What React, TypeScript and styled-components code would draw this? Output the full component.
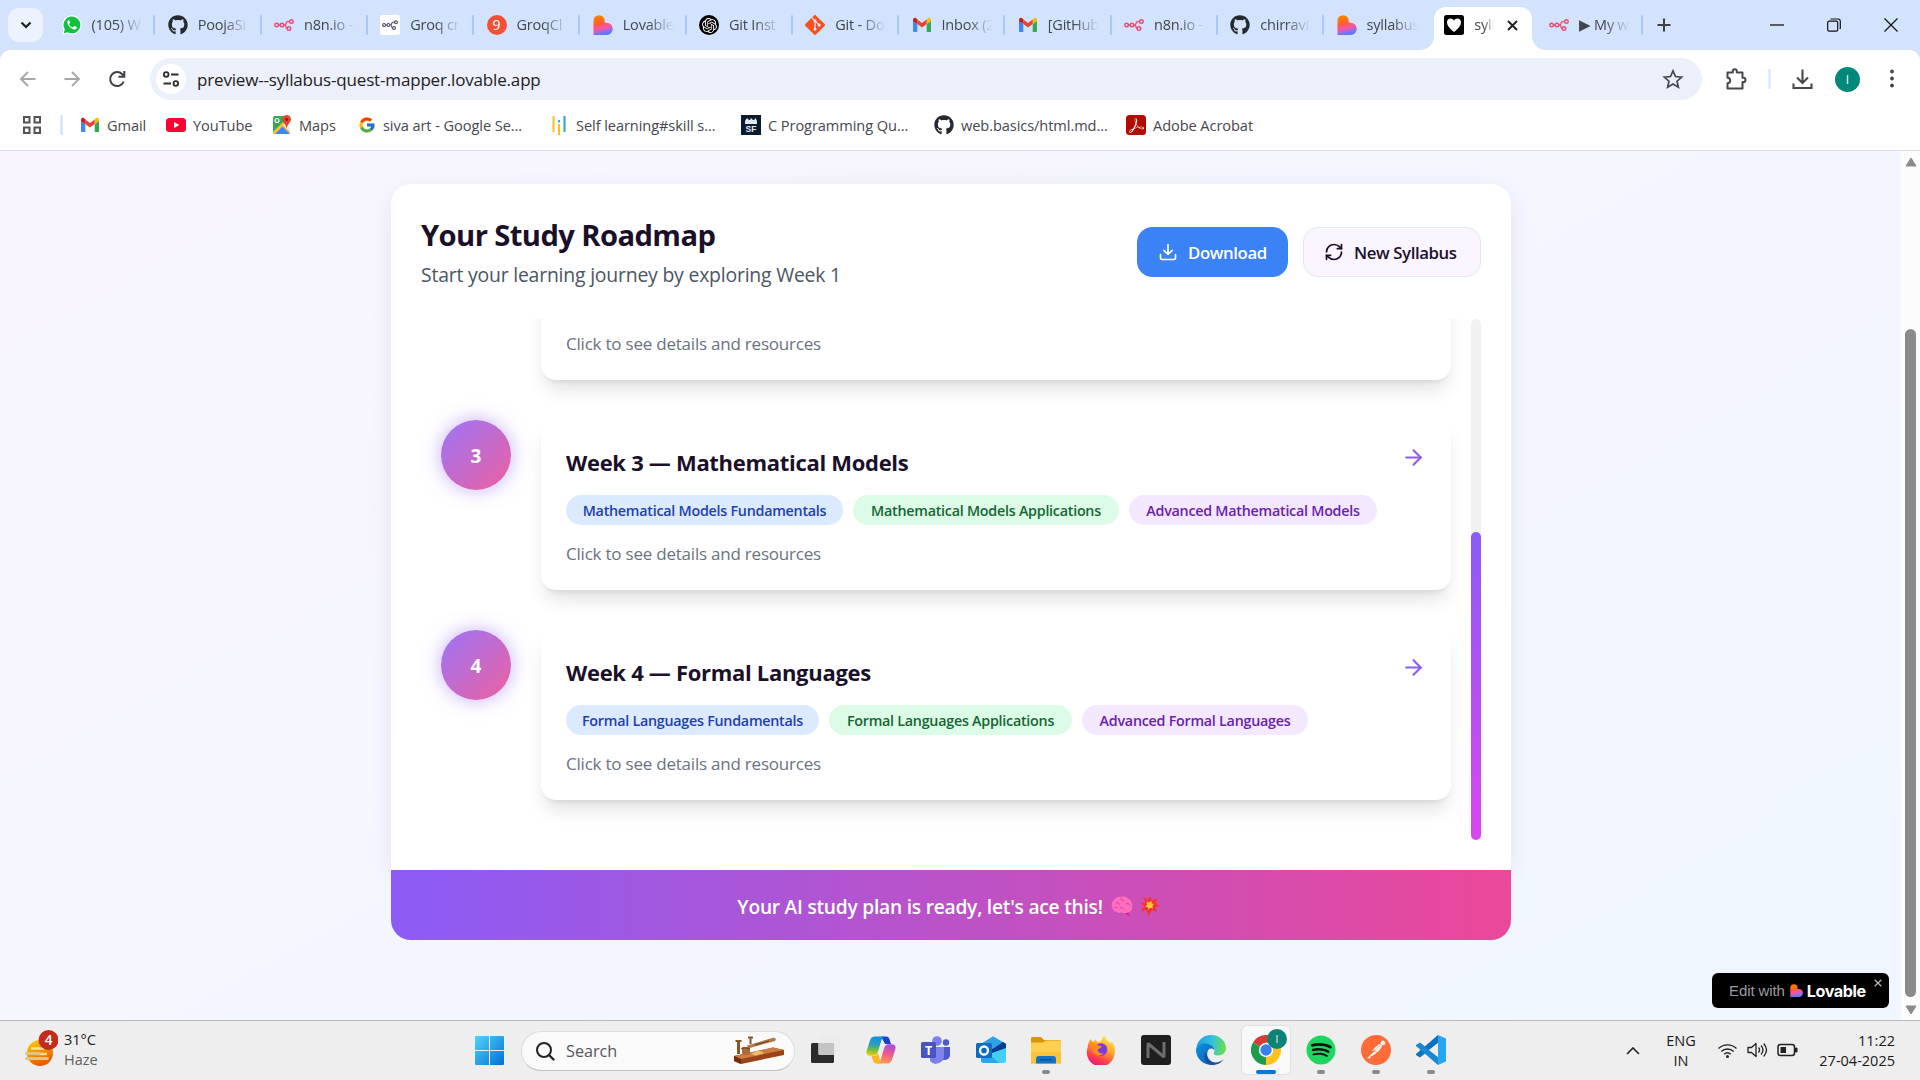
import React from "react";
import styled, { createGlobalStyle, css } from "styled-components";
import { ArrowRight, RefreshCw } from "lucide-react";
import { FaGithub, FaSpotify } from "react-icons/fa";
import { FcGoogle } from "react-icons/fc";
import { SiOpenai, SiPostman, SiGit, SiAdobeacrobatreader } from "react-icons/si";

const ui = `"Open Sans", "Noto Sans", sans-serif`;

const GlobalStyle = createGlobalStyle`
  * { box-sizing: border-box; }
  body { margin: 0; overflow: hidden; font-family: ${ui}; }
  svg { display: block; flex: none; }
`;

/* ---------- browser window ---------- */

const Screen = styled.div`
  width: 1920px;
  height: 1080px;
  display: flex;
  flex-direction: column;
  overflow: hidden;
  background: #d3e3fd;
`;

const TabStrip = styled.div`
  height: 50px;
  flex: none;
  display: flex;
  align-items: center;
  padding-left: 8px;
`;

const TabSearch = styled.div`
  width: 35px;
  height: 34px;
  border-radius: 11px;
  background: #ecf3fe;
  display: flex;
  align-items: center;
  justify-content: center;
  margin-right: 6px;
`;

const Tab = styled.div`
  width: 106.25px;
  height: 50px;
  display: flex;
  align-items: center;
  padding-left: 12.5px;
  flex: none;
`;

const TabLabel = styled.span<{ $w?: number; $ls?: number }>`
  width: ${(p) => p.$w ?? 51}px;
  margin-left: 10px;
  overflow: hidden;
  white-space: nowrap;
  font-size: 14.5px;
  letter-spacing: ${(p) => p.$ls ?? -0.2}px;
  line-height: 24px;
  color: #43474d;
  mask-image: linear-gradient(90deg, #000 50%, transparent 100%);
`;

const Divider = styled.i<{ $h?: number; $c?: string }>`
  width: 2px;
  height: ${(p) => p.$h ?? 20}px;
  border-radius: 1px;
  background: ${(p) => p.$c ?? "#a8c7fa"};
  flex: none;
`;

const TabDivider = styled(Divider)`
  margin-left: auto;
`;

const flare = css`
  content: "";
  position: absolute;
  bottom: 0;
  width: 14px;
  height: 14px;
`;

const ActiveTab = styled.div`
  position: relative;
  width: 98px;
  height: 43px;
  margin: 7px 4px 0 4px;
  border-radius: 12px 12px 0 0;
  background: #fff;
  display: flex;
  align-items: center;
  padding: 0 0 7px 10px;
  flex: none;
  &::before {
    ${flare}
    left: -14px;
    background: radial-gradient(circle at 0 0, transparent 13.5px, #fff 14.5px);
  }
  &::after {
    ${flare}
    right: -14px;
    background: radial-gradient(circle at 100% 0, transparent 13.5px, #fff 14.5px);
  }
`;

const CloseTab = styled.span`
  margin-left: 13px;
`;

const WindowButtons = styled.div`
  margin-left: auto;
  display: flex;
  align-items: center;
  gap: 43px;
  padding-right: 22px;
`;

const Toolbar = styled.div`
  height: 58px;
  flex: none;
  display: flex;
  align-items: center;
  background: #fff;
  border-radius: 11px 11px 0 0;
  padding-left: 17px;
`;

const NavButtons = styled.div`
  display: flex;
  gap: 22px;
  width: 133px;
`;

const Omnibox = styled.div`
  width: 1552px;
  height: 42px;
  border-radius: 21px;
  background: #ecf0fa;
  display: flex;
  align-items: center;
  padding: 0 18px 0 6px;
`;

const SiteInfo = styled.div`
  width: 30px;
  height: 30px;
  border-radius: 50%;
  background: #fff;
  display: flex;
  align-items: center;
  justify-content: center;
`;

const Url = styled.span`
  flex: 1;
  margin-left: 11px;
  font-size: 17px;
  letter-spacing: -0.17px;
  color: #1f2023;
`;

const ToolbarActions = styled.div`
  flex: 1;
  display: flex;
  align-items: center;
  padding-left: 22px;
`;

const Avatar = styled.div`
  width: 25px;
  height: 25px;
  border-radius: 50%;
  background: #00897b;
  color: #fff;
  font-size: 12px;
  display: flex;
  align-items: center;
  justify-content: center;
  margin: 0 30px 0 21px;
`;

const Bookmarks = styled.div`
  height: 43px;
  flex: none;
  display: flex;
  align-items: center;
  background: #fff;
  border-bottom: 1px solid #dcdde0;
  padding: 0 0 8px 22px;
`;

const Bookmark = styled.div<{ $w: number }>`
  width: ${(p) => p.$w}px;
  display: flex;
  align-items: center;
  gap: 7px;
  flex: none;
`;

const BookmarkLabel = styled.span`
  font-size: 14.6px;
  letter-spacing: -0.08px;
  line-height: 22px;
  white-space: nowrap;
  color: #45484d;
`;

/* ---------- page ---------- */

const Viewport = styled.div`
  height: 869px;
  flex: none;
  display: flex;
`;

const Page = styled.main`
  width: 1901px;
  height: 869px;
  position: relative;
  padding: 33px 0 0 391px;
  background: linear-gradient(to bottom right, #faf5ff, #eff6ff) bottom / 100% 1080px no-repeat;
`;

const Card = styled.section`
  width: 1120px;
  display: flex;
  flex-direction: column;
`;

const CardBody = styled.div`
  height: 686px;
  border-radius: 20px 20px 0 0;
  background: #fff;
  box-shadow: 0 6px 26px -4px rgba(30, 20, 60, 0.1);
`;

const CardHeader = styled.header`
  height: 135px;
  display: flex;
  align-items: center;
  justify-content: space-between;
  padding: 1px 30px 0;
`;

const Title = styled.h1`
  margin: 0;
  height: 45px;
  line-height: 41px;
  font-size: 29.2px;
  font-weight: 700;
  letter-spacing: -0.6px;
  color: #1a1029;
`;

const Subtitle = styled.p`
  margin: 0;
  height: 30px;
  line-height: 30px;
  font-size: 19.4px;
  letter-spacing: -0.2px;
  color: #4b5563;
`;

const Actions = styled.div`
  display: flex;
  gap: 15px;
`;

const Button = styled.button<{ $primary?: boolean; $w: number }>`
  width: ${(p) => p.$w}px;
  height: 50px;
  padding: 0 0 0 20px;
  border-radius: 15px;
  border: 1px solid ${(p) => (p.$primary ? "#3b82f6" : "#e2e8f0")};
  background: ${(p) => (p.$primary ? "#3b82f6" : "#faf5ff")};
  color: ${(p) => (p.$primary ? "#fff" : "#1a1029")};
  font-family: ${ui};
  font-size: 16.8px;
  font-weight: 600;
  letter-spacing: -0.4px;
  display: flex;
  align-items: center;
  gap: 10px;
  white-space: nowrap;
`;

const ScrollArea = styled.div`
  height: 521px;
  margin: 0 30px;
  display: flex;
  justify-content: space-between;
`;

const Timeline = styled.div`
  width: 1050px;
  height: 521px;
  padding: 0 20px;
  overflow: hidden;
  display: flex;
  flex-direction: column;
  justify-content: flex-end;
`;

const Week = styled.div`
  flex: none;
  height: 170px;
  margin-bottom: 40px;
  display: flex;
  justify-content: space-between;
`;

const WeekBadge = styled.div`
  width: 70px;
  height: 70px;
  border-radius: 50%;
  background: linear-gradient(135deg, #9b74f8, #ee609f);
  box-shadow: 0 0 19px rgba(139, 92, 246, 0.5);
  color: #fff;
  font-size: 19px;
  font-weight: 700;
  display: flex;
  align-items: center;
  justify-content: center;
  padding-top: 1px;
`;

const WeekCard = styled.article`
  width: 910px;
  height: 170px;
  margin-left: auto;
  border-radius: 15px;
  background: #fff;
  padding: 25px;
  display: flex;
  justify-content: space-between;
  box-shadow: 0 12.5px 19px -4px rgba(0, 0, 0, 0.12), 0 5px 7.5px -5px rgba(0, 0, 0, 0.12);
`;

const WeekDetails = styled.div`
  display: flex;
  flex-direction: column;
  justify-content: flex-end;
`;

const WeekTitle = styled.h2`
  margin: 0 0 15px;
  height: 35px;
  line-height: 35px;
  font-size: 22px;
  font-weight: 700;
  letter-spacing: -0.3px;
  color: #1a1029;
`;

const Pills = styled.div`
  display: flex;
  gap: 10px;
`;

const Pill = styled.span<{ $bg: string; $fg: string; $w: number }>`
  width: ${(p) => p.$w}px;
  height: 30px;
  line-height: 31px;
  border-radius: 15px;
  text-align: center;
  white-space: nowrap;
  font-size: 14.3px;
  font-weight: 600;
  letter-spacing: -0.25px;
  background: ${(p) => p.$bg};
  color: ${(p) => p.$fg};
`;

const Hint = styled.p`
  margin: 15px 0 -3px;
  height: 28px;
  line-height: 27px;
  font-size: 17px;
  letter-spacing: -0.22px;
  color: #6b7280;
`;

const Track = styled.div`
  width: 10px;
  height: 521px;
  border-radius: 5px;
  background: #f1f1f1;
  display: flex;
  align-items: flex-end;
`;

const Thumb = styled.div`
  width: 10px;
  height: 308px;
  border-radius: 5px;
  background: linear-gradient(#8b5cf6, #d946ef);
`;

const CardFooter = styled.footer`
  height: 70px;
  border-radius: 0 0 20px 20px;
  display: flex;
  align-items: center;
  justify-content: center;
  padding: 2px 5px 0 0;
  background: linear-gradient(90deg, #8b5cf6, #ec4899);
  color: #fff;
  font-size: 19.2px;
  font-weight: 600;
  letter-spacing: -0.24px;
  z-index: 1;
  svg:nth-of-type(1) { margin-left: 8px; }
  svg:nth-of-type(2) { margin-left: 7px; }
`;

const EditBadge = styled.div`
  position: absolute;
  right: 12px;
  bottom: 12px;
  width: 177px;
  height: 35px;
  border-radius: 6px;
  background: #000;
  display: flex;
  align-items: center;
  padding-left: 17px;
  font-family: "Liberation Sans", Arial, sans-serif;
  font-size: 15px;
  letter-spacing: -0.1px;
  color: #9a9aa0;
  svg:nth-of-type(1) { margin-left: 5px; }
  svg:nth-of-type(2) { margin: 0 0 15px 8px; }
`;

const BadgeName = styled.b`
  margin-left: 4px;
  font-family: Inter, sans-serif;
  font-weight: 700;
  font-size: 16.2px;
  letter-spacing: -0.45px;
  color: #fff;
`;

const PageScrollbar = styled.div`
  width: 19px;
  background: #fcfcfc;
  display: flex;
  flex-direction: column;
  align-items: center;
  padding: 6px 0 5px 0;
`;

const PageThumb = styled.div`
  width: 11px;
  height: 668px;
  border-radius: 6px;
  background: #8b8b8b;
  margin: auto 0 8px;
`;

/* ---------- taskbar ---------- */

const Taskbar = styled.div`
  height: 60px;
  flex: none;
  background: #eee;
  border-top: 1px solid #b9babd;
  display: flex;
  align-items: center;
  color: #1b1b1b;
`;

const Weather = styled.div`
  width: 450px;
  display: flex;
  align-items: center;
  padding: 0 0 2px 24px;
  gap: 6px;
`;

const TwoLines = styled.div<{ $align?: string; $w?: number }>`
  width: ${(p) => (p.$w ? `${p.$w}px` : "auto")};
  display: flex;
  flex-direction: column;
  text-align: ${(p) => p.$align ?? "left"};
  font-size: 14.5px;
  letter-spacing: 0;
  line-height: 20px;
  white-space: nowrap;
`;

const Muted = styled.span`
  color: #5f5f5f;
`;

const SearchBox = styled.div`
  width: 274px;
  height: 40px;
  margin: 0 7px 0 17px;
  border-radius: 20px;
  border: 1px solid #dcdcdc;
  border-bottom-color: #c2c2c2;
  background: #fafafa;
  display: flex;
  align-items: center;
  padding: 0 9px 0 13px;
`;

const SearchText = styled.span`
  flex: 1;
  margin-left: 11px;
  font-size: 16.2px;
  color: #55565a;
`;

const Apps = styled.div`
  display: flex;
  padding-bottom: 1px;
`;

const AppSlot = styled.div<{ $active?: boolean }>`
  width: 48px;
  height: 48px;
  margin-right: 7px;
  border-radius: 5px;
  background: ${(p) => (p.$active ? "#f9f9f9" : "transparent")};
  box-shadow: ${(p) => (p.$active ? "0 0 1px 1px #e0e0e0" : "none")};
  display: flex;
  flex-direction: column;
  align-items: center;
  padding-top: 9px;
`;

const Running = styled.i<{ $active?: boolean }>`
  width: ${(p) => (p.$active ? 20 : 8)}px;
  height: 4px;
  border-radius: 2px;
  margin-top: 5px;
  background: ${(p) => (p.$active ? "#0078d4" : "#8a8a8a")};
`;

const Tray = styled.div`
  margin-left: auto;
  display: flex;
  align-items: center;
  padding-right: 25px;
`;

const TrayIcons = styled.div`
  display: flex;
  gap: 9px;
  margin: 0 0 2px 21px;
`;

/* ---------- small drawings ---------- */

const Svg = ({ s = 20, h, vb, children }: { s?: number; h?: number; vb?: string; children: React.ReactNode }) => (
  <svg width={s} height={h ?? s} viewBox={vb ?? `0 0 ${s} ${h ?? s}`} fill="none">
    {children}
  </svg>
);

const N8n = ({ color = "#ea4b71", tile = false }: { color?: string; tile?: boolean }) => (
  <Svg>
    {tile && <rect width="20" height="20" rx="2" fill="#fff" />}
    <g stroke={color} strokeWidth="1.4" transform={tile ? "translate(2 2) scale(.8)" : undefined}>
      <circle cx="2.6" cy="10" r="1.8" />
      <circle cx="8" cy="10" r="1.8" />
      <circle cx="17.4" cy="6.6" r="1.8" />
      <circle cx="15" cy="13.6" r="1.8" />
      <path d="M4.4 10h1.8M9.8 10h1c1 0 1.1-.7 1.2-1.5.2-1.3.8-1.9 1.900-1.900h1.700M10.800 10c1.500 0 .9 3.600 2.400 3.600" />
    </g>
  </Svg>
);

const GmailIcon = () => (
  <Svg vb="0 0 20 20">
    <path d="M1 5.500V16c0 .6.500 1 1 1h3.300V9z" fill="#4285f4" />
    <path d="M19 5.500V16c0 .6-.5 1-1 1h-3.300V9z" fill="#34a853" />
    <path d="M14.700 4.600V9L19 5.900V4.800c0-1.700-1.900-2.600-3.200-1.600z" fill="#fbbc04" />
    <path d="M5.300 9V4.600L10 8.100l4.700-3.500V9L10 12.500z" fill="#ea4335" />
    <path d="M1 4.800v1.100L5.300 9V4.600L4.200 3.200C2.900 2.200 1 3.100 1 4.800z" fill="#c5221f" />
  </Svg>
);

const LovableIcon = ({ s = 20, id }: { s?: number; id: string }) => (
  <svg width={s} height={s} viewBox="0 0 20 20">
    <defs>
      <linearGradient id={id} x1=".3" y1="0" x2=".55" y2="1">
        <stop offset=".15" stopColor="#ff7a00" />
        <stop offset=".42" stopColor="#ff5a3c" />
        <stop offset=".65" stopColor="#f656a8" />
        <stop offset=".95" stopColor="#5a7bff" />
      </linearGradient>
    </defs>
    <path d="M.5 5.800A5.600 5.600 0 0 1 11.700 5.800V7.800H13.700A6.050 6.050 0 0 1 13.700 19.900H.5Z" fill={`url(#${id})`} />
  </svg>
);

const HeartTile = () => (
  <Svg>
    <rect width="20" height="20" rx="2.500" fill="#000" />
    <path d="M10 17C5.500 13.500 3 10.500 3 7.200 3 5 4.600 3.500 6.500 3.500c1.500 0 2.800.9 3.500 2.300.7-1.400 2-2.300 3.500-2.300C15.400 3.500 17 5 17 7.200c0 3.300-2.500 6.300-7 9.800z" fill="#fff" />
  </Svg>
);

const WhatsApp = () => (
  <Svg>
    <path d="M10 .3a9.600 9.600 0 0 0-8.400 14.300L.2 19.800l5.300-1.400A9.600 9.600 0 1 0 10 .3z" fill="#fff" />
    <path d="M10 1.500a8.400 8.400 0 0 0-7.200 12.800L1.800 18.200l4-1A8.400 8.400 0 1 0 10 1.500z" fill="#12c042" />
    <path d="M7.300 5.600c-.3-.6-.8-.5-1.200-.1-1 1-1 2.400-.1 4 1.500 2.600 3.500 4.300 6 5 1.400.3 2.600-.5 2.900-1.900.1-.4 0-.5-.4-.7l-1.900-.9c-.3-.1-.5-.1-.7.2l-.8 1c-.2.2-.4.2-.7.1-1.400-.6-2.500-1.600-3.200-2.900-.1-.3-.1-.4.1-.6l.7-.9c.1-.2.1-.4 0-.6z" fill="#fff" />
  </Svg>
);

const NineBadge = styled.div`
  width: 20px;
  height: 20px;
  border-radius: 50%;
  background: #f55036;
  color: #fff;
  font: 14px/20px ${ui};
  text-align: center;
`;

const OpenAiTile = styled.div`
  width: 20px;
  height: 20px;
  border-radius: 50%;
  background: #000;
  display: flex;
  align-items: center;
  justify-content: center;
`;

const MapsIcon = () => (
  <Svg>
    <path d="M1 3a2 2 0 0 1 2-2h11v18H3a2 2 0 0 1-2-2z" fill="#34a853" />
    <path d="M1 17 11 7l7 7v3a2 2 0 0 1-2 2H3c-1.100 0-2-.9-2-2z" fill="#fbc02d" />
    <path d="M3 19 10.500 11.500 18 19z" fill="#4285f4" />
    <path d="M11 10 13.500 7.500 18 13v4z" fill="#e8eaed" />
    <circle cx="5" cy="5.500" r="2" fill="none" stroke="#fff" strokeWidth="1.100" />
    <path d="M14.700 0a4.300 4.300 0 0 1 4.300 4.300c0 3-3.200 4.500-4.300 9-1.100-4.500-4.300-6-4.300-9A4.300 4.300 0 0 1 14.700 0z" fill="#ea4335" />
    <circle cx="14.700" cy="4.400" r="1.500" fill="#8c1a11" />
  </Svg>
);

const YouTubeIcon = () => (
  <Svg>
    <rect y="3" width="20" height="14" rx="3.500" fill="#ff0033" />
    <path d="M8 6.900v6.200l5.300-3.100z" fill="#fff" />
  </Svg>
);

const SelfIcon = () => (
  <Svg s={18} h={20}>
    <path d="M2.500 1v16" stroke="#fbbf24" strokeWidth="2" />
    <path d="M8 9v11" stroke="#fbbf24" strokeWidth="2.200" />
    <path d="M8 5v2.500" stroke="#38a8e0" strokeWidth="2" />
    <path d="M13.500 1v16" stroke="#38a8e0" strokeWidth="2.200" />
  </Svg>
);

const SfTile = styled.div`
  width: 20px;
  height: 20px;
  background: #0a1a30;
  color: #e8eef5;
  font: 700 8.5px/8px "Liberation Sans", sans-serif;
  display: flex;
  flex-direction: column;
  align-items: center;
  justify-content: center;
  gap: 1px;
`;

const SfMark = () => (
  <Svg s={14} h={7}>
    <path d="M1 7V4L3 1l2 2h1l1-2 2 2h1l1.500-2L13 4v3z" fill="#dfe8f2" />
  </Svg>
);

const AcrobatTile = styled.div`
  width: 20px;
  height: 20px;
  border-radius: 3.5px;
  background: #b30b00;
  display: flex;
  align-items: center;
  justify-content: center;
`;

const Brain = () => (
  <Svg s={22} h={22}>
    <path d="M17 17l1.500 4-3-1.500-1.500-2z" fill="#f0128f" />
    <path d="M2 14C-.5 10 .5 6 4 4c1.500-2 4-2.600 6-2 2.500-1 5.500 0 7 1.500 3 1 4.700 4.500 4 7.500.8 3-.5 5.500-3 6-3 1.500-6 1.500-8 .5-2 .8-4 .3-4.500-1C4 17 2.500 16 2 14z" fill="#ff6fc0" />
    <path d="M5 8c1.500-1 3 0 3.500 1.500M10 2.500c0 2 1 3 3 3M9 13c2-1 3 .5 4 1.500M15 9c2-1 3.500 0 3.800 1.500M3.500 13c1-1 2-.8 3 0" stroke="#f0309b" strokeWidth="1" />
  </Svg>
);

const Boom = () => (
  <Svg s={20} h={22}>
    <path d="M2.500 1l5 4 2.500-4 2 4.500L18 3l-2.500 5.500 4 2.500-4.500 1 2 5-5-2L8.500 21.500 7 15l-6 1.500L4.500 11 .5 8.500l5-1z" fill="#f8312f" />
    <path d="M7 6l2 1.500L11.500 6l.3 2.500 2.400.6-1.700 1.700.5 2.700-2.700-.8L8.500 15l-.6-2.800-2.400-.5 1.500-2-.8-1.700 1.300-.1z" fill="#ffc83d" />
  </Svg>
);

const HazeIcon = () => (
  <svg width="34" height="42" viewBox="0 0 34 42">
    <defs>
      <linearGradient id="haze" x1="0" y1="0" x2=".4" y2="1">
        <stop offset="0" stopColor="#ffd400" />
        <stop offset="1" stopColor="#e65c00" />
      </linearGradient>
    </defs>
    <circle cx="16" cy="24" r="13" fill="url(#haze)" />
    <path d="M8 19.500h11M13 25h9" stroke="#fff1b8" strokeWidth="2.500" strokeLinecap="round" opacity=".8" />
    <path d="M2.500 24.500h13M2.500 29.500h21" stroke="#dcc48a" strokeWidth="3" strokeLinecap="round" />
    <circle cx="24.500" cy="11" r="10" fill="#c42b1c" />
    <text x="24.500" y="16" textAnchor="middle" fill="#fff" fontSize="13.500" fontWeight="600" fontFamily="Open Sans, sans-serif">4</text>
  </svg>
);

const StartSlot = styled.div`
  padding-left: 25px;
`;

const WindowsLogo = () => (
  <Svg s={29}>
    <defs>
      <linearGradient id="win" x1="0" y1="0" x2="1" y2="1">
        <stop offset="0" stopColor="#52d3fb" />
        <stop offset="1" stopColor="#0070d1" />
      </linearGradient>
    </defs>
    <path d="M1 0H14v14H0V1a1 1 0 0 1 1-1zM15 0h13a1 1 0 0 1 1 1v13H15zM0 15h14v14H1a1 1 0 0 1-1-1zM15 15h14v13a1 1 0 0 1-1 1H15z" fill="url(#win)" />
  </Svg>
);

const Telegraph = () => (
  <Svg s={52} h={30}>
    <path d="M1 20 40 11.500 51 14v5L8 28l-7-3z" fill="#9b4318" />
    <path d="M1 20 40 11.500 51 14 8 23z" fill="#cf7c42" />
    <path d="M1 20l7 3v5l-7-3z" fill="#6e2c10" />
    <path d="M18 18l7-4 6 3-8 2.500z" fill="#edbd6c" />
    <path d="M14 9.500 41 1.500l2 1.500-1 2L15 12.500z" fill="#b07a49" />
    <path d="M9 11h8v6.500c-2 2-6 2-8 0z" fill="#a86c38" />
    <path d="M2.500 4h6v2H7v12H4V6H2.500zM15 .5h5v2h-1.500V8h-2V2.500H15z" fill="#8a5429" />
    <path d="M8 13c3-1.500 6-1.500 9 0M22 9l14-4" stroke="#6b3b18" />
  </Svg>
);

const TaskView = () => (
  <Svg s={30}>
    <rect x="0" y="8" width="23" height="20" rx="1.500" fill="#2b2b2b" />
    <rect x="7.500" y="0.5" width="22" height="19.500" rx="1.500" fill="#ececec" />
    <path d="M7.500 8H23v12H9a1.500 1.500 0 0 1-1.500-1.500z" fill="#c4c4c4" />
  </Svg>
);

const Copilot = () => (
  <Svg s={30}>
    <defs>
      <linearGradient id="cpa" x1=".3" y1="0" x2=".2" y2="1">
        <stop offset="0" stopColor="#0d91e1" />
        <stop offset=".4" stopColor="#2a9fb8" />
        <stop offset=".7" stopColor="#7bbf3a" />
        <stop offset="1" stopColor="#f5d000" />
      </linearGradient>
      <linearGradient id="cpb" x1=".7" y1="0" x2=".4" y2="1">
        <stop offset="0" stopColor="#a34fe0" />
        <stop offset=".5" stopColor="#f0588e" />
        <stop offset="1" stopColor="#ff9a4d" />
      </linearGradient>
    </defs>
    <path d="M15 1.500h5c2 0 3 1 3.500 2.800L25 9h-6z" fill="#1b44c0" />
    <path d="M9 1.500h9.500c-2 .8-2.700 2.500-3.300 4.500l-3.400 11c-.7 2.300-2 3.800-4.500 3.800H4c-3 0-4.200-2.200-3.300-5L4 5.500c.8-2.500 2.400-4 5-4z" fill="url(#cpa)" />
    <path d="M21 28.500h-9.500c2-.8 2.700-2.500 3.300-4.500l3.400-11c.7-2.300 2-3.800 4.500-3.800H26c3 0 4.200 2.200 3.300 5L26 24.500c-.8 2.500-2.400 4-5 4z" fill="url(#cpb)" />
    <path d="M15 28.500h-4.500c-2 0-3-1-3.500-2.800L5.500 21H8c2 0 3.500-1 4.200-3l2 8z" fill="#f6b52a" />
  </Svg>
);

const Teams = () => (
  <Svg s={30}>
    <circle cx="25" cy="7.500" r="3.200" fill="#5059c9" />
    <circle cx="16" cy="6" r="4.800" fill="#7b83eb" />
    <path d="M21 12h8v8a5 5 0 0 1-5 5h-3z" fill="#5059c9" />
    <path d="M9 12h14v8a8 8 0 0 1-14 6z" fill="#7b83eb" />
    <rect x="0" y="7" width="15" height="16" rx="1.500" fill="#4b53bc" />
    <text x="7.500" y="19.500" textAnchor="middle" fill="#fff" fontSize="12.500" fontWeight="700" fontFamily="Open Sans, sans-serif">T</text>
  </Svg>
);

const Outlook = () => (
  <Svg s={30}>
    <path d="M5 9 17 1.500 30 9v10L5 21z" fill="#1490df" />
    <path d="M5 9 17 1.500 30 9 12 20z" fill="#2fa2e4" />
    <path d="M12 17 27 7l3 2v4.500L14 24z" fill="#0a3d91" />
    <path d="M5 22 30 13v12a3 3 0 0 1-3 3H8a3 3 0 0 1-3-3z" fill="#42d0f7" />
    <path d="M5 22l8-3 10 9H8a3 3 0 0 1-3-3z" fill="#28a8ea" />
    <rect x="0" y="8" width="16" height="15" rx="1.500" fill="#0f6cbd" />
    <circle cx="8" cy="15.500" r="4" stroke="#fff" strokeWidth="2.300" />
  </Svg>
);

const Explorer = () => (
  <Svg s={30}>
    <path d="M0 3.500A1.500 1.500 0 0 1 1.500 2H10l3 3h15.500A1.500 1.500 0 0 1 30 6.500V10H0z" fill="#d9950a" />
    <path d="M0 7.500h12L15 5.500h13.500A1.500 1.500 0 0 1 30 7v21.500H0z" fill="#ffd04f" />
    <path d="M0 17h30v11.500H0z" fill="#fcc436" />
    <path d="M5 28.500V24a3 3 0 0 1 3-3h14a3 3 0 0 1 3 3v4.500z" fill="#1373c4" />
    <path d="M9 24.800h12" stroke="#0a4d8c" strokeWidth="1.200" />
  </Svg>
);

const Firefox = () => (
  <Svg s={30}>
    <defs>
      <linearGradient id="ff" x1=".8" y1="0" x2=".3" y2="1">
        <stop offset="0" stopColor="#fff14a" />
        <stop offset=".4" stopColor="#ffa72b" />
        <stop offset=".75" stopColor="#ff3f49" />
        <stop offset="1" stopColor="#e31587" />
      </linearGradient>
    </defs>
    <path d="M3 7l1-3 3 3 3-2.500 1 2.500 4-.5C16 3 17.500 1.500 18.500.5c.5 3 2 4 4 6l2.500 2 .5-2c3 3 4 7 3.300 11A14 14 0 1 1 1.500 13c.1-2.300.6-4.300 1.500-6z" fill="url(#ff)" />
    <circle cx="15" cy="14.500" r="6.300" fill="#7a3be0" />
    <path d="M4 8c3-1 6-.5 8 2.500 1 .2 3 0 3.500 1-.5 2-3 2-4 3 .3 3 3 4.500 6 4-3 3.500-9 2-10.500-2C6 13 5 10 4 8z" fill="#ff8a1f" />
  </Svg>
);

const NTile = () => (
  <Svg s={30}>
    <rect width="30" height="30" rx="3" fill="#1f1f1f" />
    <path d="M7 23V8.500L23 22V7" stroke="#6e6e6e" strokeWidth="3" strokeLinejoin="bevel" />
  </Svg>
);

const Edge = () => (
  <Svg s={30}>
    <defs>
      <linearGradient id="ed1" x1="0" y1=".4" x2="1" y2=".5">
        <stop offset="0" stopColor="#1e9de0" />
        <stop offset=".5" stopColor="#34c1e0" />
        <stop offset="1" stopColor="#6be046" />
      </linearGradient>
      <linearGradient id="ed2" x1="0" y1="0" x2="1" y2="1">
        <stop offset="0" stopColor="#1292e0" />
        <stop offset="1" stopColor="#0b57b0" />
      </linearGradient>
    </defs>
    <path d="M.5 12C2 4.500 8 0 15 0c9 0 15 6.500 15 13 0 4.500-3.500 7.500-7.500 7.500-3.500 0-5.500-1.200-4.500-3 2-3.500-1-7.500-6-7.500C6 10 2 11 .5 12z" fill="url(#ed1)" />
    <path d="M0 15C0 11 4 8.500 9 8.500c5 0 9.500 3 9.500 7-2-3-6-2.500-7 1C10 22 14 27 20 28.500 18 30 12 30.500 8 28 3 25.500 0 20 0 15z" fill="url(#ed2)" />
    <path d="M11.500 16C9 21 12 27 19 27.500c3.500.2 6-1.200 8.500-3.500-2.500 4.500-7 6-12 6C9 29 6 20 11.500 16z" fill="#1a4fa0" />
  </Svg>
);

const Chrome = () => (
  <svg width="37" height="37" viewBox="0 0 37 37">
    <path d="M15 22 2 14.500A15 15 0 0 1 28 14.500z" fill="#db3a34" />
    <path d="M15 22 2 14.500A15 15 0 0 0 15 37l7-12z" fill="#1e9b4b" />
    <path d="M15 22H15l0 15A15 15 0 0 0 28 14.500H15z" fill="#fcc31e" />
    <circle cx="15" cy="22" r="7.200" fill="#fff" />
    <circle cx="15" cy="22" r="5.700" fill="#3a80ee" />
    <circle cx="26" cy="11" r="10" fill="#0b8476" />
    <path d="M26 7v8" stroke="#9fd3cc" strokeWidth="1.500" />
  </svg>
);

const ChromeWrap = styled.div`
  width: 30px;
  height: 30px;
  svg { margin-top: -7px; }
`;

const PostmanDisc = styled.div`
  width: 30px;
  height: 30px;
  border-radius: 50%;
  background: radial-gradient(#fff 60%, transparent 65%);
`;

const SpotifyDisc = styled.div`
  width: 30px;
  height: 30px;
  border-radius: 50%;
  background: radial-gradient(#111 60%, transparent 65%);
`;

const VsCode = () => (
  <Svg s={30}>
    <path d="M22 0l8 3.500v23L22 30z" fill="#2aa5f0" />
    <path d="M22 0v8L4 22.500 0 20v-1z" fill="#0a73bd" />
    <path d="M22 30v-8L4 7.500 0 10v1z" fill="#1788d2" />
    <path d="M22 8v14l-9-7z" fill="#eee" />
  </Svg>
);

/* ---------- data ---------- */

const tabs = [
  { icon: <WhatsApp />, label: "(105) W" },
  { icon: <FaGithub size={20} color="#24292f" />, label: "PoojaSi" },
  { icon: <N8n />, label: "n8n.io -" },
  { icon: <N8n color="#4a4a68" tile />, label: "Groq cr" },
  { icon: <NineBadge>9</NineBadge>, label: "GroqCl" },
  { icon: <LovableIcon id="lv1" />, label: "Lovable" },
  { icon: <OpenAiTile><SiOpenai size={15} color="#fff" /></OpenAiTile>, label: "Git Inst" },
  { icon: <SiGit size={20} color="#f4511e" />, label: "Git - Do" },
  { icon: <GmailIcon />, label: "Inbox (2" },
  { icon: <GmailIcon />, label: "[GitHub" },
  { icon: <N8n />, label: "n8n.io -" },
  { icon: <FaGithub size={20} color="#24292f" />, label: "chirravi" },
  { icon: <LovableIcon id="lv2" />, label: "syllabus" },
];

const bookmarks = [
  { icon: <GmailIcon />, label: "Gmail", w: 86 },
  { icon: <YouTubeIcon />, label: "YouTube", w: 106 },
  { icon: <MapsIcon />, label: "Maps", w: 86 },
  { icon: <FcGoogle size={18} />, label: "siva art - Google Se...", w: 193 },
  { icon: <SelfIcon />, label: "Self learning#skill s...", w: 190 },
  { icon: <SfTile><SfMark /><span>SF</span></SfTile>, label: "C Programming Qu...", w: 193 },
  { icon: <FaGithub size={20} color="#24292f" />, label: "web.basics/html.md...", w: 192 },
  { icon: <AcrobatTile><SiAdobeacrobatreader size={15} color="#fff" /></AcrobatTile>, label: "Adobe Acrobat", w: 140 },
];

const tones = [
  { bg: "#dbeafe", fg: "#1e40af" },
  { bg: "#dcfce7", fg: "#166534" },
  { bg: "#f3e8ff", fg: "#6b21a8" },
];

type WeekInfo = { n: number; title: string; pills: string[]; w: number[] };

const weeks: WeekInfo[] = [
  { n: 3, title: "Mathematical Models", pills: ["Mathematical Models Fundamentals", "Mathematical Models Applications", "Advanced Mathematical Models"], w: [277, 266, 248] },
  { n: 4, title: "Formal Languages", pills: ["Formal Languages Fundamentals", "Formal Languages Applications", "Advanced Formal Languages"], w: [253, 243, 226] },
];

const apps = [
  { icon: <TaskView /> },
  { icon: <Copilot /> },
  { icon: <Teams /> },
  { icon: <Outlook /> },
  { icon: <Explorer />, run: true },
  { icon: <Firefox /> },
  { icon: <NTile /> },
  { icon: <Edge /> },
  { icon: <ChromeWrap><Chrome /></ChromeWrap>, run: true, active: true },
  { icon: <SpotifyDisc><FaSpotify size={30} color="#1ed760" /></SpotifyDisc>, run: true },
  { icon: <PostmanDisc><SiPostman size={30} color="#ff6c37" /></PostmanDisc>, run: true },
  { icon: <VsCode />, run: true },
];

const hint = "Click to see details and resources";

export default function App() {
  return (
    <Screen>
      <GlobalStyle />
      <TabStrip>
        <TabSearch>
          <Svg s={12} h={8}><path d="M1.500 1.500 6 6l4.500-4.500" stroke="#1f1f1f" strokeWidth="2.200" /></Svg>
        </TabSearch>
        {tabs.map((t, i) => (
          <Tab key={i}>
            {t.icon}
            <TabLabel>{t.label}</TabLabel>
            {i < 12 && <TabDivider />}
          </Tab>
        ))}
        <ActiveTab>
          <HeartTile />
          <TabLabel $w={20}>syll</TabLabel>
          <CloseTab>
            <Svg s={11}><path d="M1 1l9 9M10 1l-9 9" stroke="#1f1f1f" strokeWidth="1.900" /></Svg>
          </CloseTab>
        </ActiveTab>
        <Tab>
          <N8n />
          <TabLabel>▶ My w</TabLabel>
          <TabDivider />
        </Tab>
        <Svg s={41} h={14}><path d="M21 .5v13M14.500 7h13" stroke="#3c4043" strokeWidth="2" /></Svg>
        <WindowButtons>
          <Svg s={14} h={14}><path d="M0 7h14" stroke="#111" strokeWidth="1.300" /></Svg>
          <Svg s={14} h={14}>
            <rect x=".7" y="3.200" width="10" height="10" rx="1.500" stroke="#111" strokeWidth="1.200" />
            <path d="M3.500 1h7.500a2.300 2.300 0 0 1 2.300 2.300V11" stroke="#111" strokeWidth="1.200" />
          </Svg>
          <Svg s={14} h={14}><path d="M.5.5l13 13M13.500.5l-13 13" stroke="#111" strokeWidth="1.200" /></Svg>
        </WindowButtons>
      </TabStrip>

      <Toolbar>
        <NavButtons>
          <Svg s={22}><path d="M18.500 11H4.500M11 4l-7 7 7 7" stroke="#a5a7aa" strokeWidth="1.900" /></Svg>
          <Svg s={22}><path d="M3.500 11h14M11 4l7 7-7 7" stroke="#a5a7aa" strokeWidth="1.900" /></Svg>
          <Svg s={22}>
            <path d="M18.700 13.500a7 7 0 1 1-1.500-7.300l2 2" stroke="#3f4145" strokeWidth="2" />
            <path d="M19.300 3v5.800h-5.800" stroke="#3f4145" strokeWidth="2" />
          </Svg>
        </NavButtons>
        <Omnibox>
          <SiteInfo>
            <Svg s={18} h={16}>
              <circle cx="4.200" cy="3.500" r="2.300" stroke="#2b2d31" strokeWidth="1.800" />
              <circle cx="13.800" cy="12.500" r="2.300" stroke="#2b2d31" strokeWidth="1.800" />
              <path d="M9 3.500h7.500M1.500 12.500H9" stroke="#2b2d31" strokeWidth="1.900" />
            </Svg>
          </SiteInfo>
          <Url>preview--syllabus-quest-mapper.lovable.app</Url>
          <Svg s={22}>
            <path d="M11 2.800l2.500 5.700 6.200.6-4.700 4.100 1.400 6.100L11 16.100l-5.400 3.200L7 13.200 2.300 9.100l6.200-.6z" stroke="#45484d" strokeWidth="1.700" />
          </Svg>
        </Omnibox>
        <ToolbarActions>
          <Svg s={24}>
            <path d="M3.500 5.500h5.300V4.200a2 2 0 0 1 4 0v1.300h5.700v5.300h.9a2.100 2.100 0 0 1 0 4.200h-.9v6.500h-15v-5.300c3.600-.2 3.600-5.200 0-5.400z" stroke="#45484d" strokeWidth="2" strokeLinejoin="round" />
          </Svg>
          <Svg s={42} h={20}><path d="M21.500 0v20" stroke="#d3e3fd" strokeWidth="2" /></Svg>
          <Svg s={24}>
            <path d="M12.500 2.500v13M7 10.500l5.500 5.500 5.500-5.500M3.500 16.500v4.500h18v-4.500" stroke="#45484d" strokeWidth="2.100" />
          </Svg>
          <Avatar>I</Avatar>
          <Svg s={4} h={20}>
            <circle cx="2" cy="2.500" r="1.900" fill="#45484d" />
            <circle cx="2" cy="9.500" r="1.900" fill="#45484d" />
            <circle cx="2" cy="16.500" r="1.900" fill="#45484d" />
          </Svg>
        </ToolbarActions>
      </Toolbar>

      <Bookmarks>
        <Svg s={20}>
          <path d="M2 2h5.500v5.500H2zM12.500 2H18v5.500h-5.500zM2 12.500h5.500V18H2zM12.500 12.500H18V18h-5.500z" stroke="#505358" strokeWidth="2" />
        </Svg>
        <Svg s={38} h={20}><path d="M19.500 0v20" stroke="#c9dcfb" strokeWidth="2" /></Svg>
        {bookmarks.map((b) => (
          <Bookmark key={b.label} $w={b.w}>
            {b.icon}
            <BookmarkLabel>{b.label}</BookmarkLabel>
          </Bookmark>
        ))}
      </Bookmarks>

      <Viewport>
        <Page>
          <Card>
            <CardBody>
              <CardHeader>
                <div>
                  <Title>Your Study Roadmap</Title>
                  <Subtitle>Start your learning journey by exploring Week 1</Subtitle>
                </div>
                <Actions>
                  <Button $primary $w={151}>
                    <svg width="20" height="20" viewBox="0 0 24 24" fill="none" stroke="currentColor" strokeWidth="2" strokeLinecap="round" strokeLinejoin="round">
                      <path d="M21 15v4a2 2 0 0 1-2 2H5a2 2 0 0 1-2-2v-4M7 10l5 5 5-5M12 15V3" />
                    </svg>
                    Download
                  </Button>
                  <Button $w={178}>
                    <RefreshCw size={20} />
                    New Syllabus
                  </Button>
                </Actions>
              </CardHeader>
              <ScrollArea>
                <Timeline>
                  <Week>
                    <WeekCard>
                      <WeekDetails>
                        <Hint>{hint}</Hint>
                      </WeekDetails>
                    </WeekCard>
                  </Week>
                  {weeks.map((w) => (
                    <Week key={w.n}>
                      <WeekBadge>{w.n}</WeekBadge>
                      <WeekCard>
                        <WeekDetails>
                          <WeekTitle>Week {w.n} — {w.title}</WeekTitle>
                          <Pills>
                            {w.pills.map((p, i) => (
                              <Pill key={p} $bg={tones[i].bg} $fg={tones[i].fg} $w={w.w[i]}>{p}</Pill>
                            ))}
                          </Pills>
                          <Hint>{hint}</Hint>
                        </WeekDetails>
                        <ArrowRight size={25} color="#8b5cf6" />
                      </WeekCard>
                    </Week>
                  ))}
                </Timeline>
                <Track><Thumb /></Track>
              </ScrollArea>
            </CardBody>
            <CardFooter>
              <span>Your AI study plan is ready, let's ace this!</span>
              <Brain />
              <Boom />
            </CardFooter>
          </Card>
          <EditBadge>
            <span>Edit with</span>
            <LovableIcon s={13} id="lv3" />
            <BadgeName>Lovable</BadgeName>
            <Svg s={8} h={8}><path d="M.7.7l6.600 6.600M7.300.7L.7 7.300" stroke="#b5b5b5" strokeWidth="1.300" /></Svg>
          </EditBadge>
        </Page>
        <PageScrollbar>
          <Svg s={12} h={10}><path d="M6 1l5 8H1z" fill="#8b8b8b" stroke="#8b8b8b" strokeLinejoin="round" /></Svg>
          <PageThumb />
          <Svg s={12} h={10}><path d="M6 9L1 1h10z" fill="#8b8b8b" stroke="#8b8b8b" strokeLinejoin="round" /></Svg>
        </PageScrollbar>
      </Viewport>

      <Taskbar>
        <Weather>
          <HazeIcon />
          <TwoLines>
            <span>31°C</span>
            <Muted>Haze</Muted>
          </TwoLines>
        </Weather>
        <StartSlot><WindowsLogo /></StartSlot>
        <SearchBox>
          <Svg s={20}>
            <circle cx="9" cy="9" r="7" stroke="#222" strokeWidth="2" />
            <path d="M14 14l4.500 4.500" stroke="#222" strokeWidth="2.400" strokeLinecap="round" />
          </Svg>
          <SearchText>Search</SearchText>
          <Telegraph />
        </SearchBox>
        <Apps>
          {apps.map((a, i) => (
            <AppSlot key={i} $active={a.active}>
              {a.icon}
              {a.run && <Running $active={a.active} />}
            </AppSlot>
          ))}
        </Apps>
        <Tray>
          <Svg s={40} h={8}><path d="M1 7l6-6 6 6" stroke="#222" strokeWidth="1.600" /></Svg>
          <TwoLines $align="center" $w={30}>
            <span>ENG</span>
            <span>IN</span>
          </TwoLines>
          <TrayIcons>
            <Svg s={21} h={20}>
              <path d="M1.500 8.500a13 13 0 0 1 18 0M4.300 11.500a9 9 0 0 1 12.400 0M7.200 14.300a5 5 0 0 1 6.600 0" stroke="#222" strokeWidth="1.400" />
              <circle cx="10.500" cy="16.500" r="1.500" fill="#222" />
            </Svg>
            <Svg s={21} h={20}>
              <path d="M1 7.500h3.500L9 3.500v13l-4.500-4H1z" stroke="#222" strokeWidth="1.300" strokeLinejoin="round" />
              <path d="M11.500 7.500c1.300 1.500 1.300 3.500 0 5M14 5.500c2.500 2.800 2.500 6.200 0 9M16.700 3.500c3.500 4 3.500 9 0 13" stroke="#222" strokeWidth="1.300" />
            </Svg>
            <Svg s={21} h={20}>
              <rect x="1" y="4.500" width="16.500" height="11" rx="2.500" stroke="#222" strokeWidth="1.500" />
              <rect x="3.500" y="7" width="5.500" height="6" fill="#222" />
              <path d="M18.500 8h1.500v4h-1.500z" fill="#222" stroke="#222" />
            </Svg>
          </TrayIcons>
          <TwoLines $align="right" $w={97}>
            <span>11:22</span>
            <span>27-04-2025</span>
          </TwoLines>
        </Tray>
      </Taskbar>
    </Screen>
  );
}
